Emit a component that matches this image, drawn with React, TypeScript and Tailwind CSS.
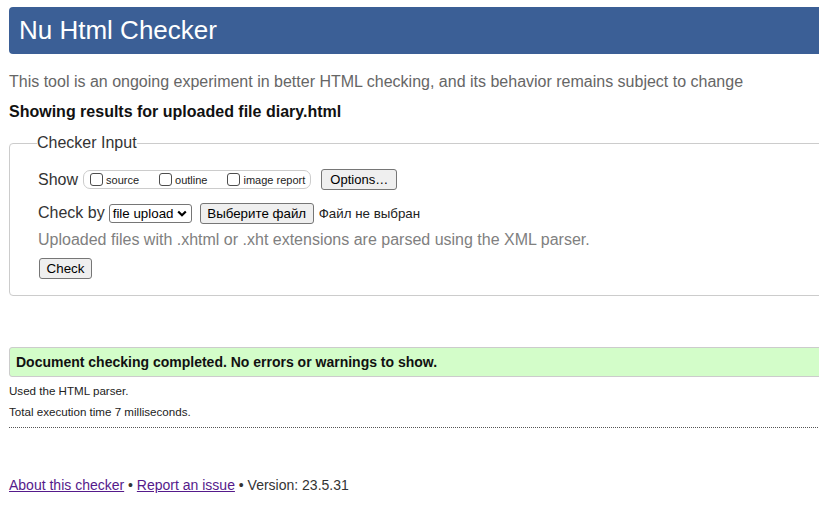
import React from "react";

function Box() {
  return <span className="inline-block h-[13px] w-[13px] shrink-0 rounded-[3px] border border-[#4d4d4d] bg-white" />;
}

export default function App() {
  return (
    <div className="h-[506px] w-[819px] overflow-hidden bg-white font-['Liberation_Sans',Arial,sans-serif]">
      <div className="w-[1100px] pl-[9px] pt-[7px]">
        <h1 className="h-[47px] rounded-[4px] bg-[#3b5f96] pl-[10px] text-[26px] font-normal leading-[47px] text-white">
          Nu Html Checker
        </h1>
        <p className="mt-[19px] text-[16px] leading-[18px] text-[#666666]">
          This tool is an ongoing experiment in better HTML checking, and its behavior remains subject to change
        </p>
        <p className="mt-[12px] text-[16px] font-bold leading-[18px] text-[#111111]">
          Showing results for uploaded file diary.html
        </p>
        <fieldset className="mt-[13px] rounded-[4px] border border-[#cccccc] pb-[16px] pl-[28px] pt-[17px]">
          <legend className="-ml-[1px] text-[16px] leading-[18px] text-[#333333]">Checker Input</legend>
          <div className="flex h-[21px] items-center text-[#333333]">
            <span className="text-[16px] leading-[18px]">Show</span>
            <div className="ml-[5px] flex h-[19px] items-center rounded-[7px] border border-[#cccccc] pl-[6px] pr-[5px] text-[11px] leading-[13px] text-[#222222]">
              <Box />
              <span className="ml-[3px] mt-[2px]">source</span>
              <span className="ml-[20px] flex items-center">
                <Box />
              </span>
              <span className="ml-[3px] mt-[2px]">outline</span>
              <span className="ml-[20px] flex items-center">
                <Box />
              </span>
              <span className="ml-[3px] mt-[2px]">image report</span>
            </div>
            <button className="ml-[10px] h-[21px] w-[76px] rounded-[3px] border border-[#767676] bg-[#efefef] text-[13px] leading-[15px] text-black">
              Options…
            </button>
          </div>
          <div className="mt-[13px] flex h-[20px] items-center text-[#333333]">
            <span className="text-[16px] leading-[18px]">Check by</span>
            <div className="ml-[4px] flex h-[19px] w-[83px] items-center justify-between rounded-[3px] border border-[#767676] bg-white pl-[3px] pr-[4px] text-[13.33px] leading-[15px] text-black">
              <span>file upload</span>
              <svg width="10" height="7" viewBox="0 0 10 7" className="mt-[1px]">
                <path d="M1.2 1.5 L5 5.2 L8.8 1.5" fill="none" stroke="#000" strokeWidth="2.2" />
              </svg>
            </div>
            <button className="ml-[8px] h-[21px] w-[114px] rounded-[3px] border border-[#767676] bg-[#efefef] text-[13.33px] leading-[15px] text-black">
              Выберите файл
            </button>
            <span className="ml-[5px] text-[13.33px] leading-[15px] text-[#222222]">Файл не выбран</span>
          </div>
          <p className="mt-[8px] text-[16px] leading-[18px] text-[#808080]">
            Uploaded files with .xhtml or .xht extensions are parsed using the XML parser.
          </p>
          <div className="mt-[9px] flex">
            <button className="ml-[1px] h-[21px] w-[53px] rounded-[3px] border border-[#767676] bg-[#efefef] text-[13.33px] leading-[15px] text-black">
              Check
            </button>
          </div>
        </fieldset>
        <div className="mt-[51px] flex h-[30px] items-center rounded-[3px] border border-[#cccccc] bg-[#d3fdc9] pl-[6px] text-[14px] font-bold leading-[16px] text-[#111111]">
          Document checking completed. No errors or warnings to show.
        </div>
        <p className="mt-[7px] text-[11.6px] leading-[14px] text-[#222222]">Used the HTML parser.</p>
        <p className="mt-[7px] text-[11.6px] leading-[14px] text-[#222222]">Total execution time 7 milliseconds.</p>
        <div className="mt-[8px] border-t border-dotted border-[#555555]" />
        <p className="mt-[49px] text-[14px] leading-[16px] text-[#333333]">
          <a href="#" className="text-[#551a8b] underline">About this checker</a>
          {" • "}
          <a href="#" className="text-[#551a8b] underline">Report an issue</a>
          {" • Version: 23.5.31"}
        </p>
      </div>
    </div>
  );
}
